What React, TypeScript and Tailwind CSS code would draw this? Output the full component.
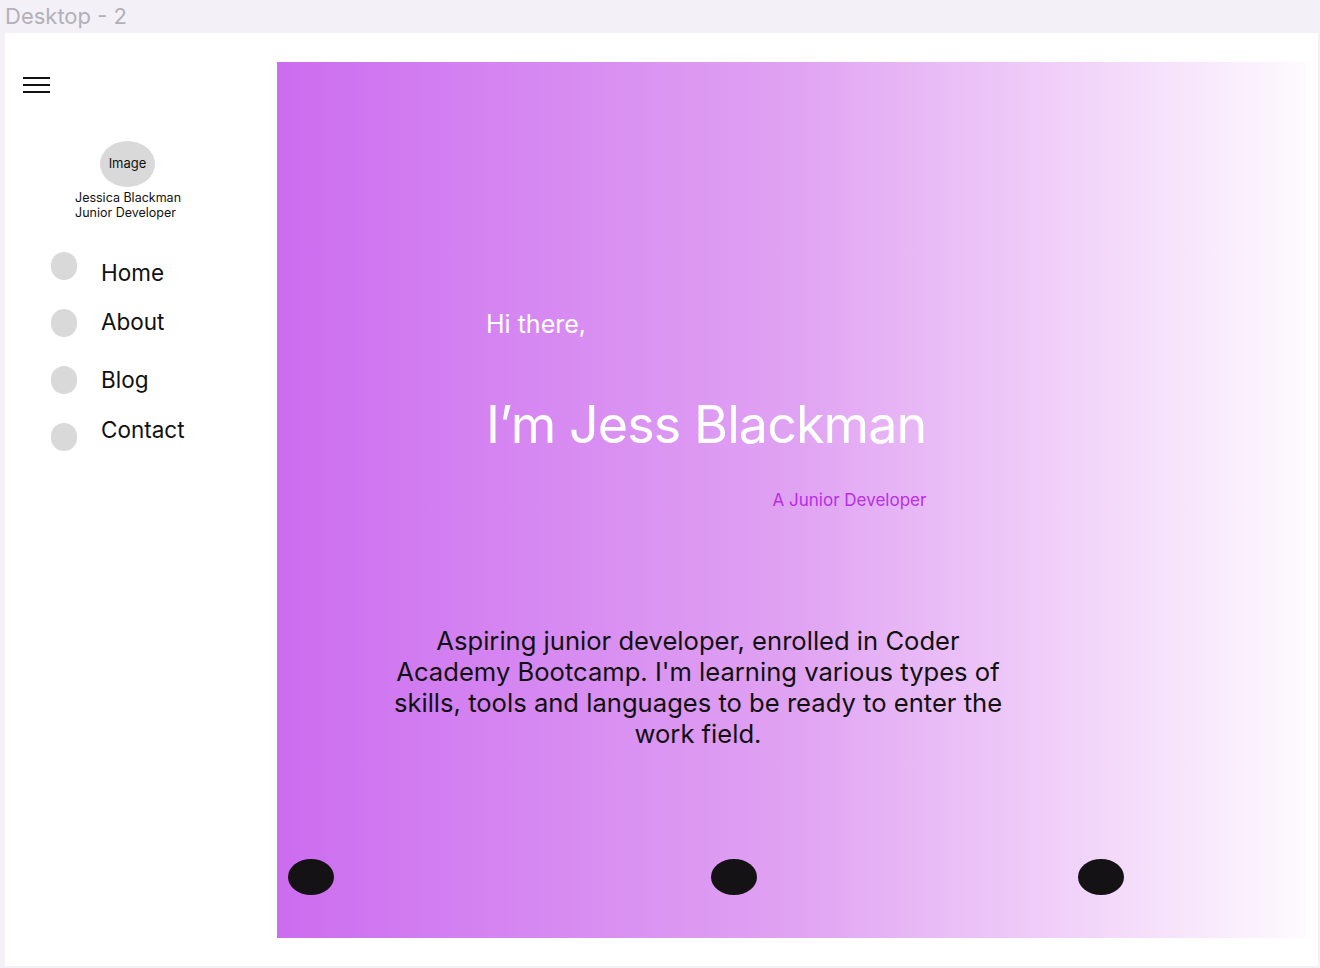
import React from "react";

const navItems = [
  { label: "Home", circleTop: "mt-0", textTop: "mt-[7px]" },
  { label: "About", circleTop: "mt-[29px]", textTop: "mt-[22px]" },
  { label: "Blog", circleTop: "mt-[29px]", textTop: "mt-[31px]" },
  { label: "Contact", circleTop: "mt-[29px]", textTop: "mt-[23px]" },
];

const Sidebar: React.FC = () => {
  return (
    <aside className="w-[272px] shrink-0 flex flex-col">
      {/* hamburger */}
      <div className="ml-[18px] mt-[44px]">
        <svg width="27" height="16" viewBox="0 0 27 16">
          <rect x="0" y="0" width="27" height="2" fill="#111" />
          <rect x="0" y="7" width="27" height="2" fill="#111" />
          <rect x="0" y="14" width="27" height="2" fill="#111" />
        </svg>
      </div>

      {/* profile */}
      <div className="ml-[95px] mt-[48px] w-[55px] h-[46px] rounded-[50%] bg-[#d9d9d9] flex items-center justify-center text-[13px] text-[#111]">
        Image
      </div>
      <div className="ml-[70px] mt-[3px] text-[12.5px] leading-[15px] text-[#111]">
        <div>Jessica Blackman</div>
        <div>Junior Developer</div>
      </div>

      {/* nav */}
      <div className="mt-[32px] ml-[46px] flex gap-[24px]">
        <div className="flex flex-col">
          {navItems.map((item) => (
            <div
              key={item.label}
              className={`${item.circleTop} w-[26px] h-[28px] rounded-full bg-[#d9d9d9]`}
            />
          ))}
        </div>
        <div className="flex flex-col">
          {navItems.map((item) => (
            <div
              key={item.label}
              className={`${item.textTop} text-[22.5px] leading-[27px] text-[#111]`}
            >
              {item.label}
            </div>
          ))}
        </div>
      </div>
    </aside>
  );
};

const Hero: React.FC = () => {
  return (
    <section className="mt-[29px] w-[1029px] h-[876px] bg-linear-to-r from-[#cc6cf0] via-[#e0a2f2] to-[#fefafe] flex flex-col pt-[247px] pb-[43px]">
      <div className="ml-[209px] w-fit flex flex-col">
        <p className="text-[25px] leading-[30px] text-white">Hi there,</p>
        <h1 className="mt-[54px] text-[52px] leading-[63px] tracking-[-0.9px] text-white">
          I’m Jess Blackman
        </h1>
        <p className="mt-[34px] text-right text-[17px] leading-[20px] text-[#b62ee6]">
          A Junior Developer
        </p>
      </div>

      <p className="ml-[111px] mt-[115px] w-[620px] text-center text-[25.6px] leading-[31px] text-[#111]">
        Aspiring junior developer, enrolled in Coder Academy Bootcamp. I'm
        learning various types of skills, tools and languages to be ready to
        enter the work field.
      </p>

      <div className="mt-auto flex pl-[11px]">
        <div className="w-[46px] h-[36px] rounded-[50%] bg-[#141214]" />
        <div className="ml-[377px] w-[46px] h-[36px] rounded-[50%] bg-[#141214]" />
        <div className="ml-[321px] w-[46px] h-[36px] rounded-[50%] bg-[#141214]" />
      </div>
    </section>
  );
};

export default function App() {
  return (
    <div className="w-[1320px] h-[968px] bg-[#f3f1f7] font-['Inter',sans-serif] overflow-hidden">
      <div className="h-[33px] pl-[5px] flex items-center text-[22px] text-[#b4b0b8]">
        Desktop - 2
      </div>
      <div className="ml-[5px] w-[1313px] h-[933px] bg-white flex">
        <Sidebar />
        <Hero />
      </div>
    </div>
  );
}
